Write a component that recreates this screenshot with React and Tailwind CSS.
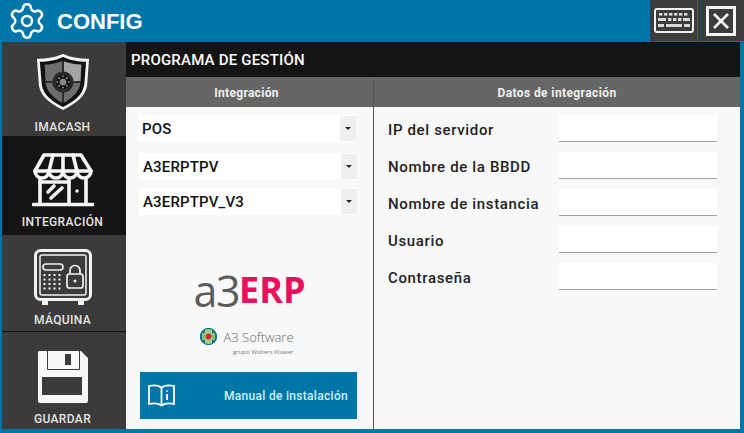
import React from "react";
import { Settings } from "lucide-react";

const din = { fontFamily: '"Roboto", "Liberation Sans", sans-serif' };

function Shield() {
  return (
    <svg width="54" height="60" viewBox="0 0 56 60">
      <path d="M28 1 C38 5 46 6 55 6 L53 34 C51 46 40 53 28 59 C16 53 5 46 3 34 L1 6 C10 6 18 5 28 1Z" fill="#f4f4f4" />
      <path d="M28 4 C37 8 45 9 52 9 L50 33 C48 44 39 50 28 56 C17 50 8 44 6 33 L4 9 C11 9 19 8 28 4Z" fill="#111" />
      <path d="M28 8 C36 11 43 12 47 12 L46 32 C44 41 37 47 28 52 C19 47 12 41 10 32 L9 12 C13 12 20 11 28 8Z" fill="#6d6d6d" />
      <path d="M29 9 C36 11 43 12 47 12 L46 29 L29 29Z" fill="#a5a5a5" />
      <path d="M28 8 V52 M9 30 H47" stroke="#1a1a1a" strokeWidth="1.6" />
      <circle cx="28" cy="30" r="11" fill="#2a2a2a" />
      <circle cx="28" cy="30" r="7.5" fill="#111" />
      <circle cx="28" cy="30" r="3.5" fill="#8a8a8a" />
      <g fill="#cfcfcf">
        <circle cx="28" cy="24" r=".8" /><circle cx="34" cy="30" r=".8" /><circle cx="28" cy="36" r=".8" /><circle cx="22" cy="30" r=".8" />
        <circle cx="32" cy="26" r=".8" /><circle cx="32" cy="34" r=".8" /><circle cx="24" cy="34" r=".8" /><circle cx="24" cy="26" r=".8" />
      </g>
    </svg>
  );
}

function Store() {
  return (
    <svg width="62" height="54" viewBox="0 0 62 54" fill="none" stroke="#f5f5f5" strokeWidth="3.6" strokeLinejoin="round" strokeLinecap="round">
      <path d="M12 2 H49 L59 18 A7 7 0 0 1 45 18 A7 7 0 0 1 31 18 A7 7 0 0 1 17 18 A7 7 0 0 1 3 18 Z" />
      <path d="M3 18 H59 M21 2 L17 18 M31 2 V18 M41 2 L45 18" />
      <path d="M8 27 V51 M54 27 V51 M1.5 51.5 H60.5" />
      <path d="M37 27 V51" />
      <path d="M8 29 H37" />
      <path d="M16 39 L22 33 M19 45 L30 35" strokeWidth="3.6" />
      <circle cx="45" cy="38" r="1.7" fill="#f5f5f5" stroke="none" />
    </svg>
  );
}

function Safe() {
  return (
    <svg width="58" height="58" viewBox="0 0 58 58" fill="none" stroke="#f2f2f2">
      <rect x="1.5" y="1.5" width="55" height="49" rx="5" strokeWidth="3" />
      <rect x="6" y="6" width="46" height="40" rx="2" strokeWidth="1.5" />
      <rect x="9" y="15" width="20" height="6" rx="3" strokeWidth="1.6" />
      <g fill="#f2f2f2" stroke="none">
        {[25, 29.5, 34, 38.5].flatMap((y) => [9.5, 14.5, 19.5, 24.5].map((x) => <rect key={x + "-" + y} x={x} y={y} width="2" height="2" />))}
        <rect x="8" y="51" width="6" height="5" />
        <rect x="44" y="51" width="6" height="5" />
        <circle cx="41" cy="32" r="1.5" />
      </g>
      <rect x="33" y="25" width="16" height="14" rx="2.5" strokeWidth="1.7" />
      <path d="M36 25 V21.5 A5 5 0 0 1 46 21.5 V25" strokeWidth="1.7" />
    </svg>
  );
}

function Floppy() {
  return (
    <svg width="52" height="54" viewBox="0 0 52 54">
      <path fillRule="evenodd" fill="#f7f7f7" d="M2 1 H44 L51 8 V51 A2 2 0 0 1 49 53 H3 A2 2 0 0 1 1 51 V3 A2 2 0 0 1 2 1Z M9 1 H10 V19 A1 1 0 0 0 11 20 H42 A1 1 0 0 0 43 19 V1 H42 V19 H11 V1Z M5 27 V45 H45 V27Z" />
      <rect x="28" y="4" width="6" height="11" fill="#3b3b3b" />
    </svg>
  );
}

function Keyboard() {
  return (
    <svg width="40" height="25" viewBox="0 0 40 25">
      <rect x="1" y="1" width="38" height="23" rx="2" fill="none" stroke="#f2f2f2" strokeWidth="2" />
      <g fill="#d8d8d8">
        {[5, 10, 15, 20, 25, 30].map((x) => <rect key={x} x={x} y="5" width="3.4" height="2.6" />)}
        <rect x="4" y="10" width="8" height="3" />
        {[14, 19, 24].map((x) => <rect key={x} x={x} y="10" width="3.4" height="3" />)}
        <rect x="29" y="10" width="7" height="3" />
        <rect x="4" y="16" width="6" height="3" />
        <rect x="12" y="16" width="16" height="3" />
        <rect x="30" y="16" width="6" height="3" />
      </g>
    </svg>
  );
}

function CloseIcon() {
  return (
    <svg width="30" height="30" viewBox="0 0 30 30" fill="none" stroke="#f5f5f5">
      <rect x="1.5" y="1.5" width="27" height="27" strokeWidth="3" />
      <path d="M8 8 L22 22 M22 8 L8 22" strokeWidth="2.6" />
    </svg>
  );
}

function Book() {
  return (
    <svg width="27" height="23" viewBox="0 0 27 23" fill="none" stroke="#ffffff" strokeWidth="1.8">
      <path d="M13.5 3.5 C10 1 5 1 1 2 V20 C5 19 10 19 13.5 21.5 C17 19 22 19 26 20 V2 C22 1 17 1 13.5 3.5Z M13.5 3.5 V21.5" />
      <path d="M19 6.5 V7.8 M19 10 V16" strokeWidth="2" />
    </svg>
  );
}

function Globe() {
  return (
    <svg width="17" height="17" viewBox="0 0 17 17">
      <circle cx="8.5" cy="8.5" r="8.5" fill="#0f7a8c" />
      <path d="M2 5 H15 V12 H2Z" fill="#8cc46a" />
      <path d="M5 1 H12 V16 H5Z" fill="#a5d08b" />
      <circle cx="8.5" cy="8.5" r="3" fill="#d8233f" />
      <circle cx="8.5" cy="8.5" r="8" fill="none" stroke="#0f6a80" strokeWidth="1" />
    </svg>
  );
}

function NavItem({ icon, label, cls, labelPad }) {
  return (
    <div className={`flex flex-col items-center pr-[3px] ${cls}`}>
      <div className="flex h-[60px] items-center justify-center">{icon}</div>
      <span className={`mt-auto text-[12px] leading-[14px] tracking-[0.35px] text-[#e4e4e4] ${labelPad}`}>{label}</span>
    </div>
  );
}

function SelectBox({ label, cls }) {
  return (
    <div className={`flex h-[27px] w-[218px] items-center justify-between bg-white pl-[4px] ${cls}`}>
      <span className="pt-[2px] text-[15px] font-medium tracking-[0.15px] text-[#111]">{label}</span>
      <span className="flex h-[25px] w-[16px] items-center justify-center bg-[#efefef]">
        <span className="border-x-[3px] border-t-[3px] border-x-transparent border-t-[#222]" />
      </span>
    </div>
  );
}

function Field({ label }) {
  return (
    <div className="flex h-[27px] items-center justify-between">
      <span className="pt-[3px] text-[15px] font-medium tracking-[0.65px] text-[#222]">{label}</span>
      <div className="h-[27px] w-[158px] border-b border-[#a0a0a0] bg-white" />
    </div>
  );
}

export default function App() {
  return (
    <div className="flex h-[433px] w-[744px] flex-col overflow-hidden bg-[#0076a8]" style={din}>
      <header className="flex h-[42px] shrink-0 items-center">
        <Settings size={40} strokeWidth={1.5} color="#fff" className="ml-[7px]" />
        <span className="ml-[10px] text-[22px] font-bold text-white" style={{ fontFamily: '"Liberation Sans", sans-serif' }}>CONFIG</span>
        <div className="ml-auto flex h-[41px] self-start">
          <div className="flex w-[47px] items-center justify-center bg-[#3c3c3c]"><Keyboard /></div>
          <div className="flex w-[47px] items-center justify-center border-l border-[#0076a8] bg-[#3c3c3c]"><CloseIcon /></div>
        </div>
      </header>
      <div className="flex h-[387px] pl-[2px] pr-[4px]">
        <nav className="flex w-[124px] shrink-0 flex-col font-medium">
          <NavItem icon={<Shield />} label="IMACASH" cls="h-[94px] bg-[#3b3b3b] pt-[10px]" labelPad="pb-[2px]" />
          <NavItem icon={<Store />} label="INTEGRACIÓN" cls="h-[99px] bg-[#141414] pt-[14px]" labelPad="pb-[6px]" />
          <NavItem icon={<Safe />} label="MÁQUINA" cls="h-[96px] bg-[#3b3b3b] pt-[13px]" labelPad="pb-[4px]" />
          <NavItem icon={<Floppy />} label="GUARDAR" cls="h-[98px] border-t border-[#111] bg-[#3b3b3b] pt-[15px]" labelPad="pb-[3px]" />
        </nav>
        <main className="flex min-w-0 flex-1 flex-col bg-[#f8f8f8]">
          <div className="flex h-[35px] shrink-0 items-center bg-[#141414] pl-[5px] pt-[2px] text-[15px] font-medium tracking-[0.2px] text-white">PROGRAMA DE GESTIÓN</div>
          <div className="flex min-h-0 flex-1">
            <section className="flex w-[248px] shrink-0 flex-col border-r border-[#555]">
              <div className="flex h-[30px] shrink-0 items-center justify-center bg-[#666] pr-[6px] pt-[1px] text-[12px] font-bold tracking-[0.3px] text-[#f0f0f0]">Integración</div>
              <div className="flex flex-col pt-[8px]">
                <SelectBox label="POS" cls="ml-[12px]" />
                <SelectBox label="A3ERPTPV" cls="ml-[13px] mt-[11px]" />
                <SelectBox label="A3ERPTPV_V3" cls="ml-[13px] mt-[8px]" />
              </div>
              <div className="mt-[54px] flex h-[42px] items-center justify-center">
                <span className="text-[43px] leading-none tracking-[-1.5px] text-[#5c5c5c]" style={{ fontFamily: '"Open Sans", sans-serif', fontWeight: 400 }}>a3</span>
                <span className="text-[36px] font-bold leading-none text-[#ee0f5c]" style={{ fontFamily: '"Open Sans", sans-serif' }}>ERP</span>
              </div>
              <div className="mt-[17px] flex h-[30px] justify-center pr-[5px]">
                <Globe />
                <div className="ml-[6px] flex flex-col items-end">
                  <span className="text-[13px] font-light leading-[18px] text-[#666]" style={{ fontFamily: '"Open Sans", sans-serif' }}>A3 Software</span>
                  <span className="mt-[2px] text-[6px] leading-[8px] text-[#777]" style={{ fontFamily: '"Open Sans", sans-serif' }}>grupo Wolters Kluwer</span>
                </div>
              </div>
              <div className="ml-[14px] mt-[14px] flex h-[47px] w-[217px] items-center justify-between bg-[#0076a8] pl-[8px] pr-[9px]">
                <Book />
                <span className="text-[12px] font-medium tracking-[0.3px] text-[#d5f0fb]">Manual de instalación</span>
              </div>
            </section>
            <section className="flex min-w-0 flex-1 flex-col">
              <div className="flex h-[30px] shrink-0 items-center justify-center bg-[#666] pt-[1px] text-[12px] font-bold tracking-[0.4px] text-[#f0f0f0]">Datos de integración</div>
              <div className="flex flex-col gap-[10px] pl-[14px] pr-[23px] pt-[8px]">
                <Field label="IP del servidor" />
                <Field label="Nombre de la BBDD" />
                <Field label="Nombre de instancia" />
                <Field label="Usuario" />
                <Field label="Contraseña" />
              </div>
            </section>
          </div>
        </main>
      </div>
    </div>
  );
}
